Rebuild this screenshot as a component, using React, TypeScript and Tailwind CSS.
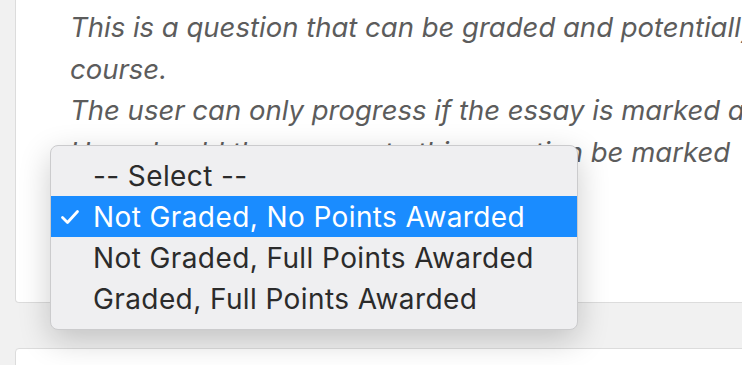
import React from 'react';

const options = [
  '-- Select --',
  'Not Graded, No Points Awarded',
  'Not Graded, Full Points Awarded',
  'Graded, Full Points Awarded',
];

function Check() {
  return (
    <svg width="20" height="16" viewBox="0 0 20 16" fill="none">
      <polyline points="2.5,8.5 7.5,13.5 17.5,2.5" stroke="white" strokeWidth="2.8" strokeLinecap="round" strokeLinejoin="round" />
    </svg>
  );
}

export default function App() {
  const selected = 1;

  return (
    <div className="relative w-[742px] h-[365px] overflow-hidden bg-[#f1f1f1]">
      {/* Question card */}
      <div className="ml-[15px] w-[800px] h-[303px] bg-white border border-t-0 border-[#dcdcdc] rounded-bl-[4px]">
        <div
          className="pl-[54px] pt-[7px] italic text-[27.5px] leading-[41.5px] text-[#5c5c5c] whitespace-nowrap"
          style={{ fontFamily: 'Inter, "Liberation Sans", sans-serif' }}
        >
          <p>This is a question that can be graded and potentially prevent a user from progressing the</p>
          <p>course.</p>
          <p>The user can only progress if the essay is marked as graded.</p>
          <p>How should the answer to this question be marked</p>
        </div>
      </div>

      {/* Next card */}
      <div className="ml-[15px] mt-[45px] w-[800px] h-[40px] bg-white border border-[#dcdcdc] rounded-tl-[4px]" />

      {/* Native select popup */}
      <div
        className="absolute left-[50px] top-[145px] w-[528px] h-[185px] pt-[9px] bg-[#efeff1] border border-[#cbcbcd] rounded-[8px] shadow-[0_10px_32px_rgba(0,0,0,0.2)]"
        style={{ fontFamily: 'Inter, "Liberation Sans", sans-serif' }}
      >
        {options.map((opt, i) => (
          <div
            key={opt}
            className={`relative h-[41px] flex items-center pl-[42px] text-[28px] tracking-[0.4px] ${
              i === selected ? 'bg-[#1a8cff] text-white' : 'text-[#2b2b2b]'
            }`}
          >
            {i === selected && (
              <span className="absolute left-[9px] top-[13px]">
                <Check />
              </span>
            )}
            {opt}
          </div>
        ))}
      </div>
    </div>
  );
}
